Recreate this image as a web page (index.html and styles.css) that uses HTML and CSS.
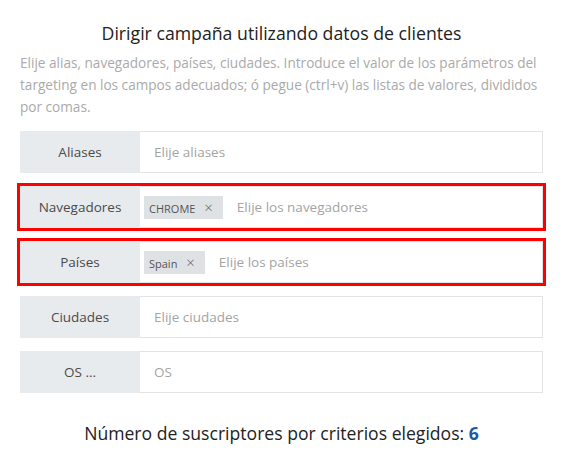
FILE: index.html
```html
<!DOCTYPE html>
<html lang="es">

<head>
    <meta charset="UTF-8">
    <title>Dirigir campaña</title>
    <link rel="stylesheet" href="styles.css">
</head>

<body>
    <div class="modal">
        <h2 class="title">Dirigir campaña utilizando datos de clientes</h2>
        <p class="hint">Elije alias, navegadores, países, ciudades. Introduce el valor de los parámetros del targeting en los campos adecuados; ó pegue (ctrl+v) las listas de valores, divididos por comas.</p>

        <div class="field">
            <div class="label">Aliases</div>
            <div class="input"><span class="placeholder">Elije aliases</span></div>
        </div>

        <div class="field marked">
            <div class="label">Navegadores</div>
            <div class="input">
                <span class="tag">CHROME <i>×</i></span>
                <span class="placeholder">Elije los navegadores</span>
            </div>
        </div>

        <div class="field marked">
            <div class="label">Países</div>
            <div class="input">
                <span class="tag">Spain <i>×</i></span>
                <span class="placeholder">Elije los países</span>
            </div>
        </div>

        <div class="field">
            <div class="label">Ciudades</div>
            <div class="input"><span class="placeholder">Elije ciudades</span></div>
        </div>

        <div class="field">
            <div class="label">OS ...</div>
            <div class="input"><span class="placeholder">OS</span></div>
        </div>

        <p class="total">Número de suscriptores por criterios elegidos: <b>6</b></p>
    </div>
</body>
</html>
```

FILE: styles.css
```css
* {
    margin: 0;
    padding: 0;
    box-sizing: border-box;
}

body {
    background: #fff;
    font-family: "Open Sans", "Liberation Sans", sans-serif;
    color: #222;
}

.modal {
    padding: 21px 22px 0 20px;
}

.title {
    font-size: 17.7px;
    font-weight: normal;
    line-height: 24px;
    text-align: center;
    color: #222;
}

.hint {
    margin-top: 7px;
    font-size: 13.6px;
    line-height: 22px;
    color: #aaa;
}

.field {
    display: flex;
    height: 42px;
    margin-top: 13px;
}

.field.marked {
    outline: 3px solid #f00;
}

.label {
    width: 120px;
    flex-shrink: 0;
    background: #e8ebee;
    color: #4a4a4a;
    font-size: 13.5px;
    display: flex;
    align-items: center;
    justify-content: center;
}

.input {
    flex: 1;
    display: flex;
    align-items: center;
    border: 1px solid #e3e3e3;
    border-left: none;
    font-size: 13.5px;
}

.placeholder {
    color: #a4a4a4;
    margin-left: 14px;
}

.tag {
    background: #dfe2e5;
    color: #555;
    font-size: 11px;
    height: 23px;
    line-height: 23px;
    padding: 0 10px 0 5px;
    margin-left: 4px;
}

.tag i {
    font-style: normal;
    font-size: 15px;
    font-weight: 300;
    margin-left: 6px;
    color: #666;
}

.total {
    margin-top: 28px;
    font-size: 17.6px;
    line-height: 24px;
    text-align: center;
    color: #222;
}

.total b {
    color: #1e5aa0;
}
```
